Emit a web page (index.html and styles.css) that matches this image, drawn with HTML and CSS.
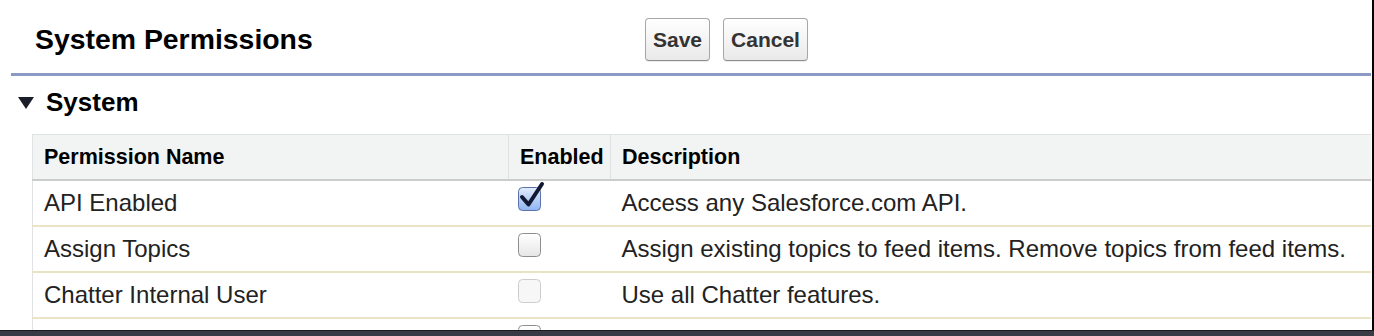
FILE: index.html
```html
<!DOCTYPE html>
<html lang="en">
<head>
<meta charset="UTF-8">
<meta name="viewport" content="width=device-width, initial-scale=1.0">
<title>System Permissions</title>
<link rel="stylesheet" href="styles.css">
</head>
<body>
<div class="frame">
    <div class="page-head">
        <h1>System Permissions</h1>
        <div class="buttons">
            <button type="button" class="btn">Save</button>
            <button type="button" class="btn">Cancel</button>
        </div>
    </div>

    <div class="section">
        <h2><span class="twisty"></span>System</h2>
        <table class="perm-table">
            <thead>
                <tr>
                    <th class="col-name">Permission Name</th>
                    <th class="col-check">Enabled</th>
                    <th class="col-desc">Description</th>
                </tr>
            </thead>
            <tbody>
                <tr>
                    <td>API Enabled</td>
                    <td class="check">
                        <svg class="cb" width="28" height="30" viewBox="0 0 28 30">
                            <defs>
                                <linearGradient id="gBlue" x1="0" y1="0" x2="0" y2="1">
                                    <stop offset="0" stop-color="#e3edfd"/>
                                    <stop offset="1" stop-color="#8fb3f2"/>
                                </linearGradient>
                            </defs>
                            <rect x="0.5" y="6.5" width="22" height="23" rx="4" fill="url(#gBlue)" stroke="#5b73a8"/>
                            <path d="M4 16 L10.5 23.5 L24 3" fill="none" stroke="#121a33" stroke-width="4" stroke-linecap="round" stroke-linejoin="round"/>
                        </svg>
                    </td>
                    <td>Access any Salesforce.com API.</td>
                </tr>
                <tr>
                    <td>Assign Topics</td>
                    <td class="check">
                        <svg class="cb" width="28" height="30" viewBox="0 0 28 30">
                            <defs>
                                <linearGradient id="gGray" x1="0" y1="0" x2="0" y2="1">
                                    <stop offset="0" stop-color="#ffffff"/>
                                    <stop offset="1" stop-color="#e6e6e6"/>
                                </linearGradient>
                            </defs>
                            <rect x="0.5" y="6.5" width="22" height="23" rx="4" fill="url(#gGray)" stroke="#8e8e8e"/>
                        </svg>
                    </td>
                    <td>Assign existing topics to feed items. Remove topics from feed items.</td>
                </tr>
                <tr>
                    <td>Chatter Internal User</td>
                    <td class="check">
                        <svg class="cb" width="28" height="30" viewBox="0 0 28 30">
                            <rect x="0.5" y="6.5" width="22" height="23" rx="4" fill="#f7f7f7" stroke="#cdcdcd"/>
                        </svg>
                    </td>
                    <td>Use all Chatter features.</td>
                </tr>
                <tr>
                    <td></td>
                    <td class="check">
                        <svg class="cb" width="28" height="30" viewBox="0 0 28 30">
                            <rect x="0.5" y="6.5" width="22" height="23" rx="4" fill="url(#gGray)" stroke="#8e8e8e"/>
                        </svg>
                    </td>
                    <td></td>
                </tr>
            </tbody>
        </table>
    </div>
</div>
<div class="taskbar"></div>
</body>
</html>
```

FILE: styles.css
```css
body {
    margin: 0;
    padding: 0;
    background-color: #050505;
    font-family: "Liberation Sans", Arial, sans-serif;
    color: #222;
}

.frame {
    width: 1372px;
    height: 330px;
    overflow: hidden;
    background-color: #fff;
}

.taskbar {
    height: 6px;
    background-color: #383b43;
    border-top: 1px solid #1a1b1f;
}

.page-head {
    display: flex;
    align-items: center;
    height: 73px;
    margin-left: 11px;
    width: 1360px;
    border-bottom: 3px solid #8a9bc3;
}

h1 {
    flex: 0 0 610px;
    margin: 6px 0 0 0;
    padding-left: 24px;
    font-size: 28.4px;
    font-weight: bold;
    color: #000;
}

.buttons {
    display: flex;
    gap: 13px;
    margin-top: 6px;
}

.btn {
    height: 43px;
    padding: 0 7px;
    font-family: "Liberation Sans", Arial, sans-serif;
    font-size: 21px;
    font-weight: bold;
    color: #333;
    background: linear-gradient(#ffffff, #e9e9e9);
    border: 1px solid #a7a7a7;
    border-bottom-color: #8c8c8c;
    border-radius: 4px;
    box-shadow: 0 1px 1px rgba(0, 0, 0, 0.08);
}

.section h2 {
    display: flex;
    align-items: center;
    height: 58px;
    margin: 0;
    padding: 0 0 6px 18px;
    box-sizing: border-box;
    font-size: 26px;
    font-weight: bold;
    color: #000;
}

.twisty {
    width: 0;
    height: 0;
    margin: 2px 12px 0 0;
    border-left: 8px solid transparent;
    border-right: 8px solid transparent;
    border-top: 12px solid #1b1e2a;
}

.perm-table {
    margin-left: 32px;
    width: 1339px;
    border-collapse: collapse;
    table-layout: fixed;
    border-left: 1px solid #e0e3e5;
}

.perm-table th {
    height: 44px;
    padding: 0 0 0 11px;
    text-align: left;
    font-size: 21.5px;
    font-weight: bold;
    color: #000;
    background-color: #f2f3f3;
    border-top: 1px solid #e0e3e5;
    border-bottom: 2px solid #cccccc;
}

.perm-table th + th {
    border-left: 1px solid #dfe2e4;
}

.col-name {
    width: 464px;
}

.col-check {
    width: 90px;
}

.perm-table td {
    height: 44px;
    padding: 0 0 0 11px;
    font-size: 24px;
    border-bottom: 2px solid #ebe3c5;
    white-space: nowrap;
}

.perm-table td.check {
    vertical-align: top;
    padding-left: 9px;
}

.cb {
    display: block;
    overflow: visible;
}
```
